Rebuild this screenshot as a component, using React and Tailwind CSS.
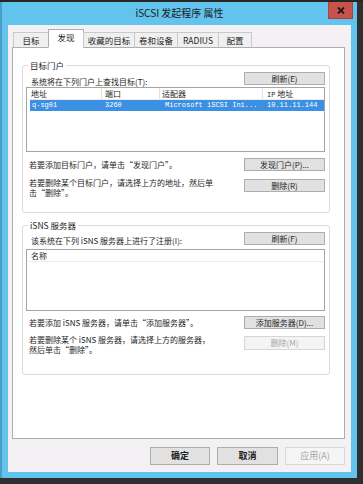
import React from 'react';

const tabs = [
  { label: '目标', w: 'w-[36px]' },
  { label: '发现', w: 'w-[36px]', active: true },
  { label: '收藏的目标', w: 'w-[52px]' },
  { label: '卷和设备', w: 'w-[44px]' },
  { label: 'RADIUS', w: 'w-[42px]' },
  { label: '配置', w: 'w-[34px]' }
];

const Btn = ({ children, disabled, className = '' }) => (
  <div
    className={`w-[81px] h-[13px] shrink-0 flex items-center justify-center border text-[8px] leading-none ${
      disabled
        ? 'bg-[#f4f4f4] border-[#d6d6d6] text-[#a8a8a8]'
        : 'bg-[#e1e1e1] border-[#adadad] text-[#1e1e1e]'
    } ${className}`}
  >
    {children}
  </div>
);

const Group = ({ title, children, className = '' }) => (
  <fieldset
    className={`border border-[#dcdcdc] rounded-[3px] pl-[3px] pr-[4px] ${className}`}
  >
    <legend className="ml-[2px] px-[2px] text-[8.5px] leading-[11px] text-[#1e1e1e]">
      {title}
    </legend>
    {children}
  </fieldset>
);

const App = () => {
  return (
    <div className="w-[363px] h-[484px] bg-[#2f2f2f] overflow-hidden font-['Noto_Sans_CJK_SC','Noto_Sans',sans-serif] text-[#1e1e1e]">
      <div className="h-[2px] bg-[#262626]" />

      {/* window */}
      <div className="w-[357px] h-[476px] flex flex-col bg-[#62c4ec] border-l-[2px] border-[#4a9fc4]">
        {/* title bar */}
        <div className="h-[23px] shrink-0 relative flex items-center justify-center">
          <span className="text-[10px] leading-none text-[#1a1a1a] mt-[-2px]">
            iSCSI 发起程序 属性
          </span>
          <div className="absolute right-[4px] top-0 w-[25px] h-[17px] bg-[#c9524b] border border-[#a8433d] border-t-0 flex items-center justify-center">
            <svg width="8" height="7" viewBox="0 0 8 7">
              <path d="M1 0.5 L7 6.5 M7 0.5 L1 6.5" stroke="#1a1a1a" strokeWidth="1.8" />
            </svg>
          </div>
        </div>

        {/* body */}
        <div className="ml-[6px] mr-[6px] h-[447px] bg-[#f4f1f4] flex flex-col pl-[4px] pr-[6px] pt-[5px] pb-[7px]">
          {/* tabs */}
          <div className="h-[18px] shrink-0 flex items-end pl-[1px] relative z-10 -mb-px">
            {tabs.map((t, i) =>
              t.active ? (
                <div
                  key={t.label}
                  className={`${t.w} h-[19px] -ml-px bg-white border border-[#adadad] border-b-white flex items-center justify-center text-[8.5px] leading-none pb-[3px]`}
                >
                  {t.label}
                </div>
              ) : (
                <div
                  key={t.label}
                  className={`${t.w} h-[16px] ${i > 0 ? '-ml-px' : ''} bg-[#f0f0f0] border border-[#c9c9c9] border-b-[#adadad] flex items-center justify-center text-[8.5px] leading-none`}
                >
                  {t.label}
                </div>
              )
            )}
          </div>

          {/* panel */}
          <div className="flex-1 min-h-0 bg-white border border-[#adadad] pl-[9px] pr-[14px]">
            <Group title="目标门户" className="mt-[12px] pb-[15px]">
              <div className="flex justify-between pt-[1px]">
                <div className="mt-[5px] pl-[5px] text-[8px] leading-[10px]">
                  系统将在下列门户上查找目标(T):
                </div>
                <Btn>刷新(E)</Btn>
              </div>
              <div className="h-[65px] border border-[#a5a5a5] bg-white">
                <div className="h-[12px] flex border-b border-[#ececec] text-[8px] leading-[12px]">
                  <div className="w-[75px] pl-[4px] border-r border-[#e3e3e3]">地址</div>
                  <div className="w-[58px] pl-[3px] border-r border-[#e3e3e3]">端口</div>
                  <div className="w-[103px] pl-[2px] border-r border-[#e3e3e3]">适配器</div>
                  <div className="flex-1 pl-[4px]">
                    <span className="font-['Liberation_Mono',monospace] text-[7px]">IP</span> 地址
                  </div>
                </div>
                <div className="h-[11px] ml-[3px] bg-[#3c90e2] flex text-white font-['Liberation_Mono',monospace] text-[7px] leading-[11px]">
                  <div className="w-[72px] pl-[2px]">q-sg01</div>
                  <div className="w-[58px] pl-[3px]">3260</div>
                  <div className="w-[103px] pl-[5px]">Microsoft iSCSI Ini...</div>
                  <div className="flex-1 pl-[4px]">10.11.11.144</div>
                </div>
              </div>

              <div className="flex justify-between mt-[6px]">
                <div className="pl-[3px] text-[8px] leading-[13px]">
                  若要添加目标门户，请单击“发现门户”。
                </div>
                <Btn>发现门户(P)...</Btn>
              </div>

              <div className="flex justify-between mt-[8px]">
                <div className="pl-[3px] -mt-[1px] text-[8px] leading-[9.5px]">
                  若要删除某个目标门户，请选择上方的地址，然后单
                  <br />
                  击“删除”。
                </div>
                <Btn>删除(R)</Btn>
              </div>
            </Group>

            <Group title="iSNS 服务器" className="mt-[7px] pb-[20px]">
              <div className="flex justify-between pt-[1px]">
                <div className="mt-[4px] pl-[5px] text-[8px] leading-[10px]">
                  该系统在下列 iSNS 服务器上进行了注册(I):
                </div>
                <Btn>刷新(F)</Btn>
              </div>
              <div className="h-[62px] mt-[3px] border border-[#a5a5a5] bg-white">
                <div className="h-[12px] border-b border-[#ececec] pl-[4px] text-[8px] leading-[12px]">
                  名称
                </div>
              </div>

              <div className="flex justify-between mt-[5px]">
                <div className="pl-[3px] text-[8px] leading-[13px]">
                  若要添加 iSNS 服务器，请单击“添加服务器”。
                </div>
                <Btn>添加服务器(D)...</Btn>
              </div>

              <div className="flex justify-between mt-[7px]">
                <div className="pl-[3px] -mt-[1px] text-[8px] leading-[9.5px]">
                  若要删除某个 iSNS 服务器，请选择上方的服务器，
                  <br />
                  然后单击“删除”。
                </div>
                <Btn disabled className="h-[14px]">删除(M)</Btn>
              </div>
            </Group>
          </div>

          {/* dialog buttons */}
          <div className="h-[18px] mt-[8px] shrink-0 flex justify-end gap-[7px] text-[9px]">
            <div className="w-[60px] h-full bg-[#e1e1e1] border border-[#adadad] flex items-center justify-center font-bold text-[#222]">
              确定
            </div>
            <div className="w-[61px] h-full bg-[#e1e1e1] border border-[#adadad] flex items-center justify-center font-bold text-[#222]">
              取消
            </div>
            <div className="w-[60px] h-full bg-[#f5f5f5] border border-[#d8d8d8] flex items-center justify-center text-[#a6a6a6]">
              应用(A)
            </div>
          </div>
        </div>
      </div>
    </div>
  );
};

export default App;
